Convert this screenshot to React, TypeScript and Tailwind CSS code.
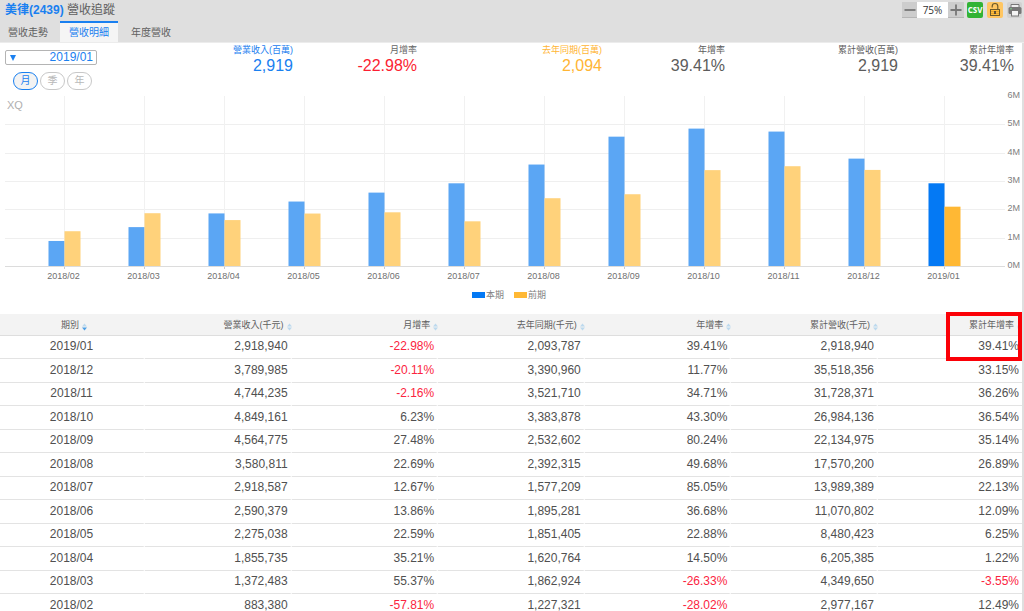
import React, { useState } from "react";
import clsx from "clsx";

type Row = {
  period: string;
  revenue: number;
  mom: number;
  lastYear: number;
  yoy: number;
  total: number;
  totalYoy: number;
};

const rows: Row[] = [
  { period: "2019/01", revenue: 2918940, mom: -22.98, lastYear: 2093787, yoy: 39.41, total: 2918940, totalYoy: 39.41 },
  { period: "2018/12", revenue: 3789985, mom: -20.11, lastYear: 3390960, yoy: 11.77, total: 35518356, totalYoy: 33.15 },
  { period: "2018/11", revenue: 4744235, mom: -2.16, lastYear: 3521710, yoy: 34.71, total: 31728371, totalYoy: 36.26 },
  { period: "2018/10", revenue: 4849161, mom: 6.23, lastYear: 3383878, yoy: 43.3, total: 26984136, totalYoy: 36.54 },
  { period: "2018/09", revenue: 4564775, mom: 27.48, lastYear: 2532602, yoy: 80.24, total: 22134975, totalYoy: 35.14 },
  { period: "2018/08", revenue: 3580811, mom: 22.69, lastYear: 2392315, yoy: 49.68, total: 17570200, totalYoy: 26.89 },
  { period: "2018/07", revenue: 2918587, mom: 12.67, lastYear: 1577209, yoy: 85.05, total: 13989389, totalYoy: 22.13 },
  { period: "2018/06", revenue: 2590379, mom: 13.86, lastYear: 1895281, yoy: 36.68, total: 11070802, totalYoy: 12.09 },
  { period: "2018/05", revenue: 2275038, mom: 22.59, lastYear: 1851405, yoy: 22.88, total: 8480423, totalYoy: 6.25 },
  { period: "2018/04", revenue: 1855735, mom: 35.21, lastYear: 1620764, yoy: 14.5, total: 6205385, totalYoy: 1.22 },
  { period: "2018/03", revenue: 1372483, mom: 55.37, lastYear: 1862924, yoy: -26.33, total: 4349650, totalYoy: -3.55 },
  { period: "2018/02", revenue: 883380, mom: -57.81, lastYear: 1227321, yoy: -28.02, total: 2977167, totalYoy: 12.49 },
];

const summary = [
  { label: "營業收入(百萬)", value: "2,919", color: "text-[#1a80f0]" },
  { label: "月增率", value: "-22.98%", color: "text-[#fb1e32]", labelColor: "text-[#666]" },
  { label: "去年同期(百萬)", value: "2,094", color: "text-[#ffb534]" },
  { label: "年增率", value: "39.41%", color: "text-[#5c5c5c]" },
  { label: "累計營收(百萬)", value: "2,919", color: "text-[#5c5c5c]" },
  { label: "累計年增率", value: "39.41%", color: "text-[#5c5c5c]" },
];

const tabs = ["營收走勢", "營收明細", "年度營收"];
const units = ["月", "季", "年"];
const columns = ["營業收入(千元)", "月增率", "去年同期(千元)", "年增率", "累計營收(千元)", "累計年增率"];

const SortIcon = ({ active }: { active?: boolean }) => (
  <svg viewBox="0 0 5 8" className="w-[5px] h-2 shrink-0 mt-1" aria-hidden="true">
    <path d="M2.5 0.5L5 3.6H0z" fill="#bcd9ee" />
    <path d="M2.5 7.5L5 4.4H0z" fill={active ? "#4d9fe6" : "#bcd9ee"} />
  </svg>
);

const Toolbar = () => (
  <div className="flex items-center h-4 mt-[2px]">
    <button aria-label="縮小" className="w-[15px] h-4 bg-[#cdcdcd] border-b border-[#b5b5b5] flex items-center justify-center">
      <svg viewBox="0 0 12 12" className="w-3 h-3" stroke="#777" strokeWidth="1.8">
        <path d="M0.5 6h11" />
      </svg>
    </button>
    <span className="w-[31px] h-4 bg-white text-center text-[10px] leading-4 text-[#333] font-['Open_Sans',sans-serif]">
      75%
    </span>
    <button aria-label="放大" className="w-4 h-4 bg-[#cdcdcd] border-b border-[#b5b5b5] flex items-center justify-center">
      <svg viewBox="0 0 12 12" className="w-3 h-3" stroke="#777" strokeWidth="1.8">
        <path d="M0.5 6h11M6 0.5v11" />
      </svg>
    </button>
    <button className="w-4 h-4 ml-[3px] rounded-xs bg-[#32b335] text-white text-[8px] leading-4 font-bold font-['Open_Sans',sans-serif]">
      CSV
    </button>
    <button aria-label="鎖定" className="w-4 h-4 ml-1 rounded-xs bg-[#ffc662] flex items-center justify-center">
      <svg viewBox="0 0 16 16" className="w-4 h-4" fill="none" stroke="#6b5a2c">
        <path d="M5.2 5.5V4.3a2.8 2.8 0 0 1 5.6 0V7.5" strokeWidth="1.2" />
        <rect x="3.5" y="7.5" width="9" height="6" fill="#ffbd3a" />
        <path d="M4 9.5h8M4 11.5h8" stroke="#c98f2b" strokeWidth="0.6" />
        <path d="M8 9v3" stroke="#333" strokeWidth="1.5" />
      </svg>
    </button>
    <button aria-label="列印" className="w-[15px] h-4 ml-1 rounded-xs bg-[#d2d2d2] flex items-center justify-center">
      <svg viewBox="0 0 16 16" className="w-4 h-4 shrink-0">
        <path d="M4 6V2.5h8V6" fill="#eee" stroke="#777" />
        <rect x="1.5" y="5" width="13" height="7" rx="1.5" fill="#777" />
        <path d="M3 6.8h2" stroke="#7fd08a" strokeWidth="0.9" />
        <rect x="4.5" y="8.5" width="7" height="5.5" fill="#f4f4f4" stroke="#777" />
      </svg>
    </button>
  </div>
);

const BASE = 176;
const STEP = 80;
const scale = (v: number) => (v / 6000000) * 170;

const Chart = () => {
  const data = [...rows].reverse();
  return (
    <svg viewBox="0 0 1022 194" className="block w-full font-['Liberation_Sans',sans-serif]" role="img" aria-label="營收圖表">
      {[1, 2, 3, 4, 5].map((n) => {
        const y = Math.round(BASE - scale(n * 1000000)) + 0.5;
        return <line key={n} x1="5" x2="1005" y1={y} y2={y} stroke="#efefef" />;
      })}
      {data.map((d, i) => (
        <line key={d.period} x1={64.5 + i * STEP} x2={64.5 + i * STEP} y1="6" y2={BASE} stroke="#f1f1f1" />
      ))}
      <text x="7" y="19" fontSize="11" fill="#b0b0b0">
        XQ
      </text>
      {data.map((d, i) => {
        const x = 48.5 + i * STEP;
        const current = i === data.length - 1;
        return (
          <g key={d.period}>
            <rect x={x} y={BASE - scale(d.revenue)} width="16" height={scale(d.revenue)} fill={current ? "#0479f4" : "#5ba6f4"} />
            <rect x={x + 16} y={BASE - scale(d.lastYear)} width="16" height={scale(d.lastYear)} fill={current ? "#ffb834" : "#ffd27b"} />
            <line x1={x + 16} x2={x + 16} y1={BASE} y2={BASE + 3} stroke="#ccc" />
            <text x={x + 15} y="189" textAnchor="middle" fontSize="9" fill="#707070">
              {d.period}
            </text>
          </g>
        );
      })}
      <line x1="5" x2="1005" y1={BASE + 0.5} y2={BASE + 0.5} stroke="#dcdcdc" />
      {[0, 1, 2, 3, 4, 5, 6].map((n) => (
        <text key={n} x="1020" y={BASE + 2 - scale(n * 1000000)} textAnchor="end" fontSize="9" fill="#808080">
          {n}M
        </text>
      ))}
    </svg>
  );
};

const Cell = ({ value, percent }: { value: number; percent?: boolean }) => (
  <td
    className={clsx(
      "text-right pt-0 pb-[2px] pr-[2px] border-b border-r-2 border-b-[#e3e3e3] border-r-white last:border-r-0 last:pr-[3px]",
      value < 0 ? "text-[#fb2440]" : "text-[#505050]"
    )}
  >
    {percent ? `${value.toFixed(2)}%` : value.toLocaleString("en-US")}
  </td>
);

const App = () => {
  const [tab, setTab] = useState(1);
  const [unit, setUnit] = useState(0);

  return (
    <div className="h-screen overflow-hidden bg-white font-['Liberation_Sans','Noto_Sans_CJK_TC',sans-serif]">
      <header className="bg-[#dfdfdf] border-b border-[#ececec]">
        <div className="flex justify-between h-[21px] pl-[5px] pr-[2px]">
          <h1 className="text-xs leading-5 text-[#606060]">
            <a href="#" className="font-bold text-[#1a80f0]">
              美律(2439)
            </a>{" "}
            營收追蹤
          </h1>
          <Toolbar />
        </div>
        <nav className="flex">
          {tabs.map((t, i) => (
            <button
              key={t}
              onClick={() => setTab(i)}
              className={clsx(
                "h-[21px] text-[10px] leading-5 border-t-2 whitespace-nowrap",
                i === 0 ? "w-[60px] pl-2 text-left" : "w-[58px]",
                i === 2 && "ml-1",
                i === tab ? "bg-[#f5f5f5] border-[#1a80f0] text-[#1a80f0]" : "border-transparent text-[#606060]"
              )}
            >
              {t}
            </button>
          ))}
        </nav>
      </header>

      <main className="border-r-2 border-[#dfdfdf]">
        <section className="flex pr-2">
          <div className="w-[97px] pl-[5px] pt-[7px] shrink-0">
            <div className="flex items-center h-[15px] border border-[#b4b4b4] rounded-xs pl-1 pr-[3px]">
              <svg viewBox="0 0 6 6" className="w-[6px] h-[6px] shrink-0" fill="#1a80f0" aria-hidden="true">
                <path d="M0 0h6L3 6z" />
              </svg>
              <select
                aria-label="期別"
                className="flex-1 min-w-0 appearance-none bg-transparent text-xs leading-[13px] text-[#1a80f0] [text-align-last:right] outline-none"
              >
                {rows.map((r) => (
                  <option key={r.period}>{r.period}</option>
                ))}
              </select>
            </div>
            <div className="flex gap-[2px] mt-[7px] pl-2">
              {units.map((u, i) => (
                <button
                  key={u}
                  aria-pressed={i === unit}
                  onClick={() => setUnit(i)}
                  className={clsx(
                    "w-[25px] h-[18px] rounded-full border text-[10px] leading-4 shrink-0",
                    i === unit ? "border-[#1a80f0] text-[#1a80f0] bg-[#f3f3f3]" : "border-[#c8c8c8] text-[#b8b8b8]"
                  )}
                >
                  {u}
                </button>
              ))}
            </div>
          </div>
          <dl className="flex-1 grid grid-cols-[196fr_124fr_185fr_123fr_173fr_116fr] text-right">
            {summary.map((s) => (
              <div key={s.label} className={s.color}>
                <dt className={clsx("text-[9px] leading-[14px]", s.labelColor)}>{s.label}</dt>
                <dd className="text-base leading-[18px]">{s.value}</dd>
              </div>
            ))}
          </dl>
        </section>

        <Chart />

        <div className="flex justify-center gap-[10px] h-[30px] pt-1 pr-1 text-[9px] leading-[14px] text-[#808080]">
          <span className="flex items-center h-[14px] gap-px">
            <i className="w-[13px] h-[6px] bg-[#0479f4]" />
            本期
          </span>
          <span className="flex items-center h-[14px] gap-px">
            <i className="w-[13px] h-[6px] bg-[#ffb834]" />
            前期
          </span>
        </div>

        <div className="relative">
          <table className="w-full table-fixed border-separate border-spacing-0 text-xs">
            <thead>
              <tr className="h-[22px] bg-[#f3f3f3] text-[9px] text-[#606060]">
                <th className="w-[145px] p-0 pl-[3px] font-normal border-b border-[#dedede]">
                  <span className="flex items-center justify-center gap-[3px]">
                    期別
                    <SortIcon active />
                  </span>
                </th>
                {columns.map((c) => (
                  <th key={c} className="p-0 font-normal border-b border-[#dedede] last:w-[144px]">
                    <span className="flex items-center justify-end gap-[3px] whitespace-nowrap">
                      {c}
                      <SortIcon />
                    </span>
                  </th>
                ))}
              </tr>
            </thead>
            <tbody>
              {rows.map((r) => (
                <tr key={r.period} className="odd:h-[23px] even:h-[24px]">
                  <td className="p-0 pb-[2px] text-center text-[#505050] border-b border-r-2 border-b-[#e3e3e3] border-r-white">
                    {r.period}
                  </td>
                  <Cell value={r.revenue} />
                  <Cell value={r.mom} percent />
                  <Cell value={r.lastYear} />
                  <Cell value={r.yoy} percent />
                  <Cell value={r.total} />
                  <Cell value={r.totalYoy} percent />
                </tr>
              ))}
            </tbody>
          </table>
          {/* highlight on the accumulated growth */}
          <div className="absolute -top-[2px] right-0 w-[76px] h-[49px] border-4 border-[#fb0007] pointer-events-none" />
        </div>
      </main>
    </div>
  );
};

export default App;
